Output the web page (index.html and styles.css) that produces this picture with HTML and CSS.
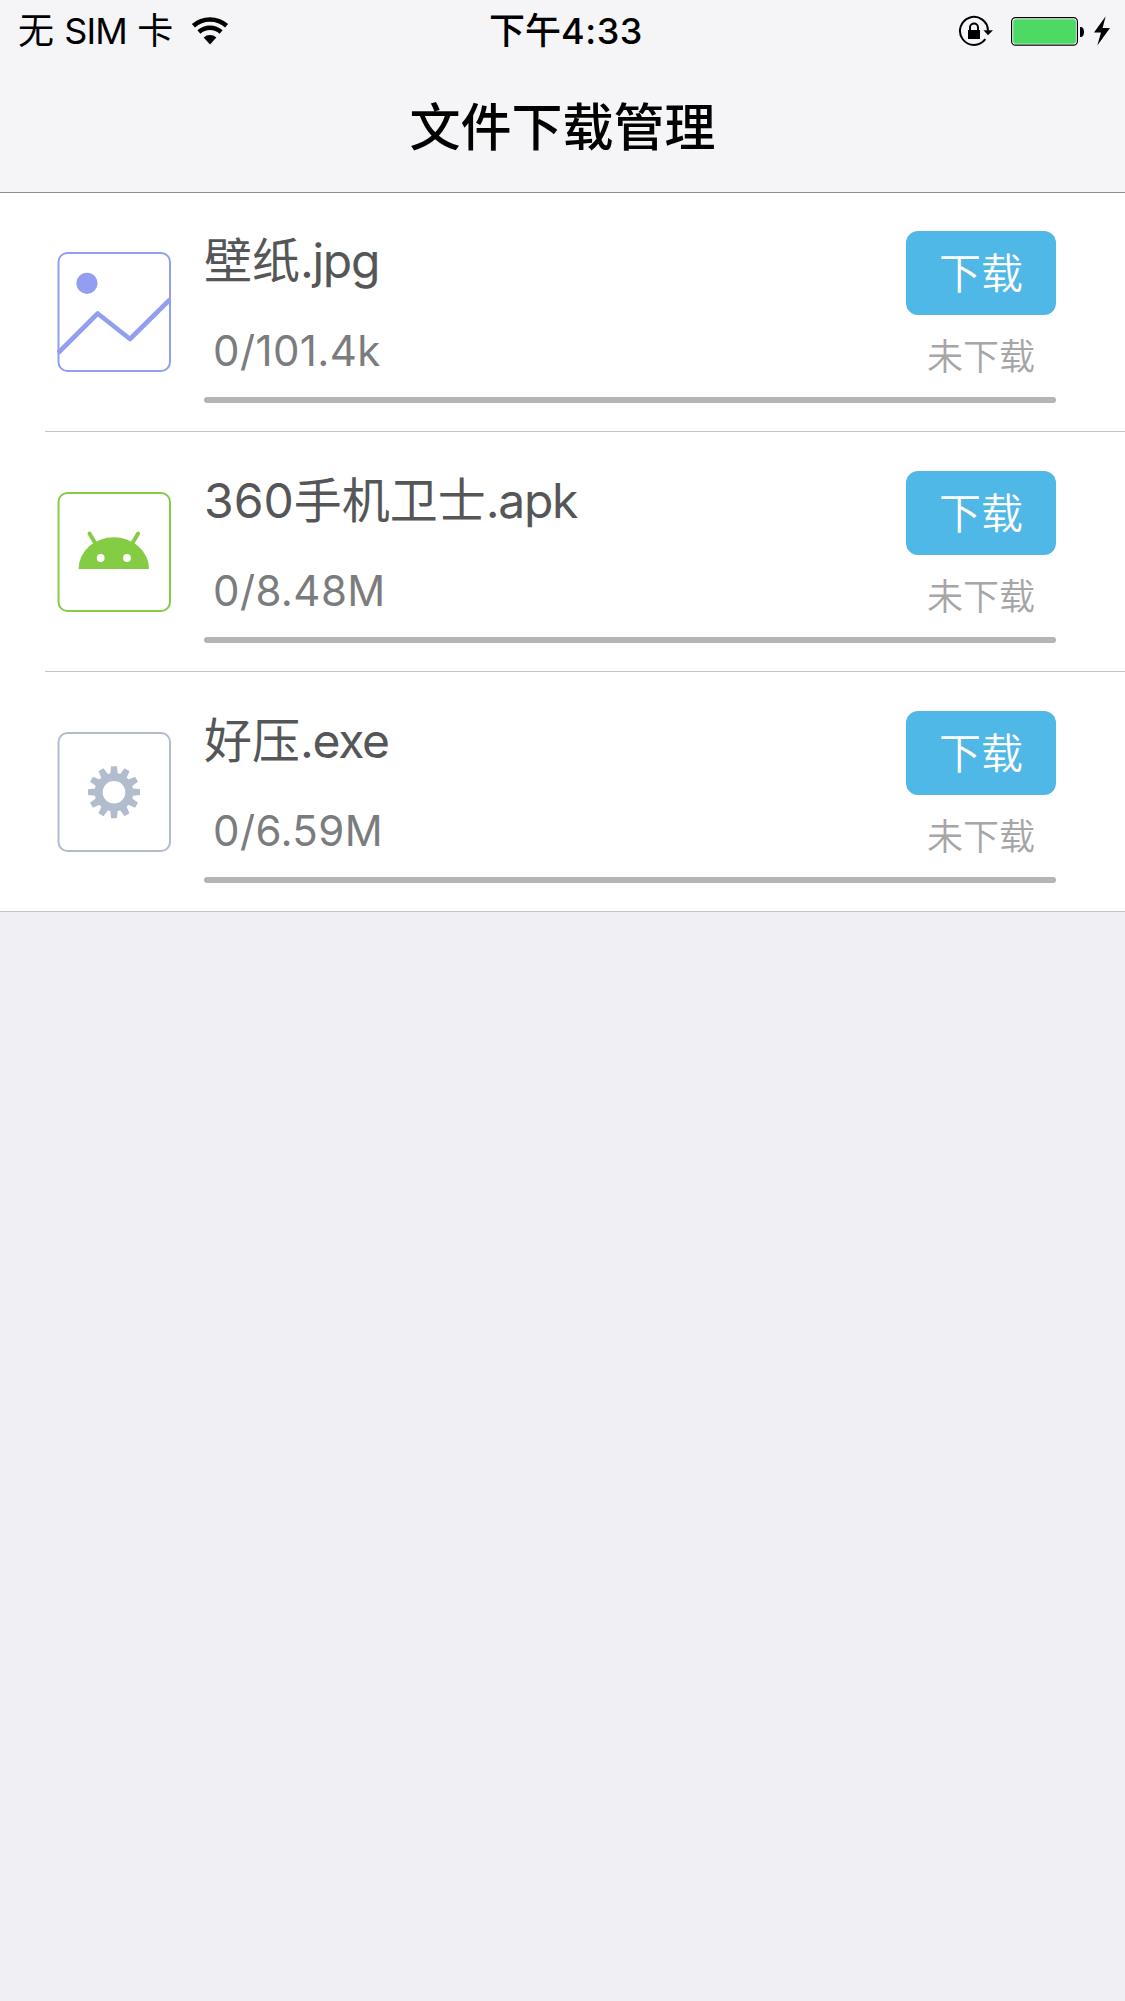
FILE: index.html
```html
<!DOCTYPE html>
<html lang="zh-CN">
<head>
<meta charset="utf-8">
<title>文件下载管理</title>
<link rel="stylesheet" href="styles.css">
</head>
<body>
<header class="header">
  <div class="status-bar">
    <div class="carrier">
      <span>无 <span class="sim">SIM</span> 卡</span>
      <svg class="wifi" width="38" height="28" viewBox="-19 -27.5 38 28">
        <path d="M-16.6-18.7A25 25 0 0 1 16.6-18.7M-11.1-12.5A16.7 16.7 0 0 1 11.1-12.5" fill="none" stroke="#000" stroke-width="4.6"/>
        <path d="M0 0L-6.3-7A9.4 9.4 0 0 1 6.3-7Z"/>
      </svg>
    </div>
    <div class="clock">下午<span class="digits">4:33</span></div>
    <div class="indicators">
      <svg width="152" height="32" viewBox="958 14 152 32">
        <path d="M985.3 38.2A14 14 0 1 1 988 29.5" fill="none" stroke="#000" stroke-width="2"/>
        <path d="M983.5 29.3H993L988 34.2Z"/>
        <rect x="968" y="29" width="12" height="9"/>
        <path d="M970 29.500V26.500a4 4 0 0 1 8 0V29.500" fill="none" stroke="#000" stroke-width="2"/>
        <rect x="1011.600" y="16.600" width="65.800" height="27.600" rx="4" fill="#fff" stroke="#000" stroke-width="1.200"/>
        <rect x="1013.200" y="18.200" width="62.700" height="24.500" rx="2.600" fill="#4cd964"/>
        <path d="M1080 26h1.500q2.500 1 2.500 5t-2.500 5h-1.500z"/>
        <path d="M1105.700 15.300L1094 31.500H1101L1097.300 44.500L1110 27H1102.600Z"/>
      </svg>
    </div>
  </div>
  <h1 class="title">文件下载管理</h1>
</header>
<main class="list">
  <section class="item">
    <svg class="file-icon image" width="114" height="120" viewBox="0 0 114 120">
      <rect x="1.500" y="1" width="111.500" height="118" rx="9" fill="none" stroke="currentColor" stroke-width="2"/>
      <circle cx="30" cy="31.300" r="10.600" fill="currentColor"/>
      <path d="M1 101L40.700 61.500L73 87L113 47.500" fill="none" stroke="currentColor" stroke-width="4.600" stroke-linejoin="round"/>
    </svg>
    <div class="detail">
      <div class="info">
        <div class="name">壁纸<span class="ext">.jpg</span></div>
        <div class="size">0/101.4k</div>
      </div>
      <div class="action">
        <button class="download">下载</button>
        <div class="state">未下载</div>
      </div>
      <div class="progress"></div>
    </div>
  </section>
  <section class="item">
    <svg class="file-icon android" width="114" height="120" viewBox="0 0 114 120">
      <rect x="1.500" y="1" width="111.500" height="118" rx="9" fill="none" stroke="currentColor" stroke-width="2"/>
      <path d="M21.600 77A35.200 31.700 0 0 1 92 77Z" fill="currentColor"/>
      <path d="M32.500 41.500L39 52.500M81.100 41.500L74.600 52.500" stroke="currentColor" stroke-width="4" stroke-linecap="round"/>
      <circle cx="43.700" cy="66" r="3.900" fill="#fff"/>
      <circle cx="70" cy="66" r="3.900" fill="#fff"/>
    </svg>
    <div class="detail">
      <div class="info">
        <div class="name">360手机卫士<span class="ext">.apk</span></div>
        <div class="size">0/8.48M</div>
      </div>
      <div class="action">
        <button class="download">下载</button>
        <div class="state">未下载</div>
      </div>
      <div class="progress"></div>
    </div>
  </section>
  <section class="item">
    <svg class="file-icon program" width="114" height="120" viewBox="0 0 114 120">
      <defs><path id="tooth" d="M-3.900-17L-2.900-26H2.900L3.900-17Z"/></defs>
      <rect x="1.500" y="1" width="111.500" height="118" rx="9" fill="none" stroke="currentColor" stroke-width="2"/>
      <g transform="translate(57 60.200)" fill="currentColor">
        <circle r="15.300" fill="none" stroke="currentColor" stroke-width="8"/>
        <use href="#tooth"/><use href="#tooth" transform="rotate(30)"/><use href="#tooth" transform="rotate(60)"/>
        <use href="#tooth" transform="rotate(90)"/><use href="#tooth" transform="rotate(120)"/><use href="#tooth" transform="rotate(150)"/>
        <use href="#tooth" transform="rotate(180)"/><use href="#tooth" transform="rotate(210)"/><use href="#tooth" transform="rotate(240)"/>
        <use href="#tooth" transform="rotate(270)"/><use href="#tooth" transform="rotate(300)"/><use href="#tooth" transform="rotate(330)"/>
      </g>
    </svg>
    <div class="detail">
      <div class="info">
        <div class="name">好压<span class="ext">.exe</span></div>
        <div class="size">0/6.59M</div>
      </div>
      <div class="action">
        <button class="download">下载</button>
        <div class="state">未下载</div>
      </div>
      <div class="progress"></div>
    </div>
  </section>
</main>
</body>
</html>
```
FILE: styles.css
```css
* { box-sizing: border-box; }
body {
  margin: 0;
  min-height: 2001px;
  background: #efeff4;
  font-family: Inter, "Noto Sans CJK SC", sans-serif;
}
svg { display: block; }
.header {
  height: 193px;
  background: #f5f5f7;
  border-bottom: 1px solid #8e8e90;
  color: #000;
}
.status-bar {
  display: grid;
  grid-template-columns: 1fr auto 1fr;
  align-items: center;
  height: 60px;
  padding: 0 15px 0 18px;
  font-size: 36px;
  line-height: 62px;
  white-space: nowrap;
}
.carrier { display: flex; align-items: center; gap: 18px; }
.sim { letter-spacing: -0.8px; }
.clock { padding-left: 4px; font-weight: 500; }
.digits { letter-spacing: 0.6px; }
.indicators { display: flex; justify-content: flex-end; }
.title {
  margin: 0;
  padding-top: 32px;
  font-size: 51px;
  font-weight: 500;
  line-height: 72px;
  text-align: center;
}
.list { margin-top: -1px; }
.item {
  display: flex;
  height: 240px;
  padding-left: 57px;
  background: linear-gradient(#c4c4c7, #c4c4c7) right bottom / 1080px 1px no-repeat, #fff;
}
.item:first-child { border-top: 1px solid #8e8e90; }
.item:first-child .file-icon { margin-top: 59px; }
.item:first-child .detail { padding-top: 38px; }
.item:last-child { background-size: 100% 1px; }
.file-icon { flex: none; margin-top: 60px; }
.image { color: #929ef0; }
.android { color: #84cc44; }
.program { color: #b1bccd; }
.detail {
  display: grid;
  grid-template-columns: 1fr 150px;
  grid-template-rows: 166px 6px;
  width: 852px;
  margin-left: 33px;
  padding-top: 39px;
}
.name {
  height: 60px;
  font-size: 48px;
  line-height: 60px;
  color: #555657;
  white-space: nowrap;
}
.ext { letter-spacing: -1.3px; }
.size {
  margin: 33px 0 0 9px;
  font-size: 42px;
  letter-spacing: 0.4px;
  line-height: 54px;
  color: #7b7c7d;
}
.download {
  display: block;
  width: 150px;
  height: 84px;
  padding: 0 0 4px;
  border: 0;
  border-radius: 12px;
  background: #50b8e6;
  color: #fff;
  font: 350 42px/80px "Noto Sans CJK SC", sans-serif;
}
.state {
  margin-top: 15px;
  font-size: 36px;
  font-weight: 350;
  line-height: 54px;
  text-align: center;
  color: #a6a6a6;
}
.progress {
  grid-column: 1 / -1;
  height: 6px;
  border-radius: 3px;
  background: #b5b5b5;
}
```
